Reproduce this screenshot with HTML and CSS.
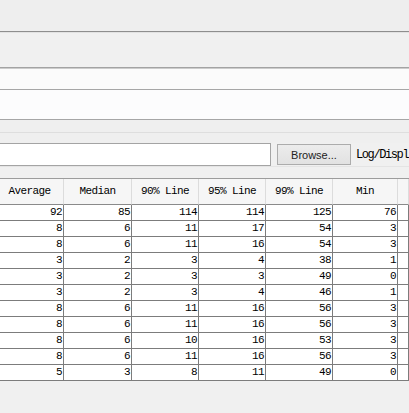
FILE: index.html
```html
<!DOCTYPE html>
<html>
<head>
<meta charset="utf-8">
<link rel="stylesheet" href="styles.css">
</head>
<body>
<div class="app">
  <div class="toolbar"></div>
  <div class="pane1"></div>
  <div class="field1"></div>
  <div class="field2"></div>
  <div class="pane2"><div class="pane2-line"></div></div>
  <div class="filerow">
    <div class="input"></div>
    <div class="button">Browse...</div>
    <div class="label">Log/Displ</div>
  </div>
  <div class="gap"></div>
  <div class="grid">
    <div class="row head">
      <div class="cell">Average</div><div class="cell">Median</div><div class="cell">90% Line</div><div class="cell">95% Line</div><div class="cell">99% Line</div><div class="cell">Min</div><div class="cell"></div>
    </div>
    <div class="row"><div class="cell">92</div><div class="cell">85</div><div class="cell">114</div><div class="cell">114</div><div class="cell">125</div><div class="cell">76</div><div class="cell"></div></div>
    <div class="row"><div class="cell">8</div><div class="cell">6</div><div class="cell">11</div><div class="cell">17</div><div class="cell">54</div><div class="cell">3</div><div class="cell"></div></div>
    <div class="row"><div class="cell">8</div><div class="cell">6</div><div class="cell">11</div><div class="cell">16</div><div class="cell">54</div><div class="cell">3</div><div class="cell"></div></div>
    <div class="row"><div class="cell">3</div><div class="cell">2</div><div class="cell">3</div><div class="cell">4</div><div class="cell">38</div><div class="cell">1</div><div class="cell"></div></div>
    <div class="row"><div class="cell">3</div><div class="cell">2</div><div class="cell">3</div><div class="cell">3</div><div class="cell">49</div><div class="cell">0</div><div class="cell"></div></div>
    <div class="row"><div class="cell">3</div><div class="cell">2</div><div class="cell">3</div><div class="cell">4</div><div class="cell">46</div><div class="cell">1</div><div class="cell"></div></div>
    <div class="row"><div class="cell">8</div><div class="cell">6</div><div class="cell">11</div><div class="cell">16</div><div class="cell">56</div><div class="cell">3</div><div class="cell"></div></div>
    <div class="row"><div class="cell">8</div><div class="cell">6</div><div class="cell">11</div><div class="cell">16</div><div class="cell">56</div><div class="cell">3</div><div class="cell"></div></div>
    <div class="row"><div class="cell">8</div><div class="cell">6</div><div class="cell">10</div><div class="cell">16</div><div class="cell">53</div><div class="cell">3</div><div class="cell"></div></div>
    <div class="row"><div class="cell">8</div><div class="cell">6</div><div class="cell">11</div><div class="cell">16</div><div class="cell">56</div><div class="cell">3</div><div class="cell"></div></div>
    <div class="row"><div class="cell">5</div><div class="cell">3</div><div class="cell">8</div><div class="cell">11</div><div class="cell">49</div><div class="cell">0</div><div class="cell"></div></div>
  </div>
</div>
</body>
</html>
```
FILE: styles.css
```css
html, body {
  margin: 0;
  padding: 0;
  background: #f0f0f0;
  overflow: hidden;
}
.app {
  width: 409px;
  height: 413px;
  overflow: hidden;
  background: #f0f0f0;
  font-family: "Liberation Mono", monospace;
  font-size: 11px;
  letter-spacing: -0.6px;
  color: #000;
}
.toolbar {
  height: 31px;
  background: #eeeeee;
  border-bottom: 1px solid #8e8e8e;
}
.pane1 {
  height: 34px;
  background: #f0f0f0;
  border-top: 1px solid #e2e2e2;
  border-bottom: 1px solid #a3a3a3;
}
.field1 {
  height: 20px;
  background: #fbfbfb;
  border-top: 1px solid #cccccc;
  border-bottom: 1px solid #a6a6a6;
}
.field2 {
  height: 29px;
  background: #fcfcfd;
  border-bottom: 1px solid #a6a6a6;
}
.pane2 {
  height: 23px;
  box-sizing: border-box;
  padding-top: 12px;
  background: #efefef;
}
.pane2-line {
  border-top: 1px solid #dedede;
}
.filerow {
  display: flex;
  align-items: center;
  height: 23px;
  overflow: hidden;
}
.input {
  flex: 0 0 271px;
  height: 23px;
  box-sizing: border-box;
  background: #fff;
  border: 1px solid #a4a4a4;
  border-left: none;
}
.button {
  flex: 0 0 74px;
  margin-left: 6px;
  height: 21px;
  box-sizing: border-box;
  border: 1px solid #acacac;
  background: linear-gradient(#ececec, #e2e2e2);
  font-family: "Liberation Sans", Arial, sans-serif;
  font-size: 11px;
  letter-spacing: 0;
  display: flex;
  align-items: center;
  justify-content: center;
  color: #222;
}
.label {
  flex: 0 0 auto;
  margin-left: 5px;
  white-space: nowrap;
  font-size: 12px;
  letter-spacing: -1.4px;
}
.gap {
  height: 11px;
  border-top: 1px solid #e4e4e4;
}
.grid {
  width: 413px;
  margin-left: -4px;
  border-top: 1px solid #9c9c9c;
}
.row {
  display: grid;
  grid-template-columns: 68px 68px 67px 67px 67px 65px 1fr;
  height: 16px;
  background: #fff;
}
.cell {
  box-sizing: border-box;
  border-right: 1px solid #7c7c7c;
  border-bottom: 1px solid #7c7c7c;
  text-align: right;
  padding-right: 1px;
  line-height: 15px;
  white-space: nowrap;
  overflow: hidden;
}
.row.head {
  height: 26px;
  background: #f6f6f6;
}
.row.head .cell {
  text-align: center;
  padding: 0;
  line-height: 25px;
  border-right: 1px solid #dcdcdc;
  border-bottom: 1px solid #8a8a8a;
}
```
